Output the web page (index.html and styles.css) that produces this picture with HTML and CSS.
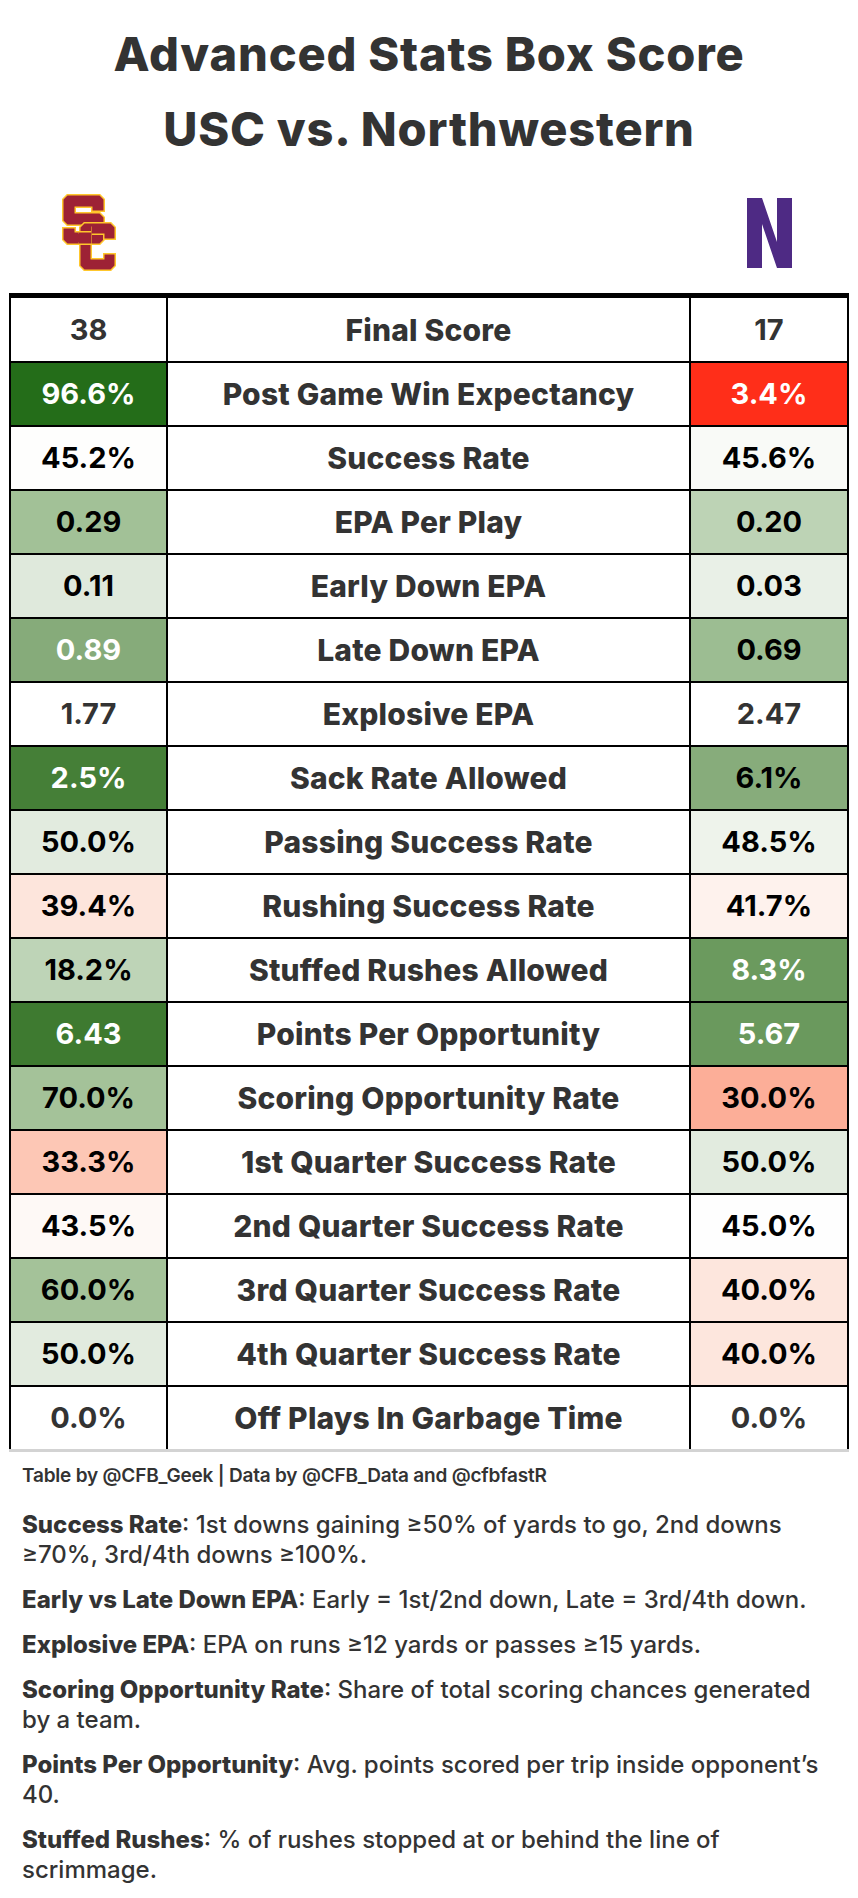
FILE: index.html
```html
<!DOCTYPE html>
<html lang="en">
<head>
<meta charset="utf-8">
<title>Advanced Stats Box Score</title>
<link rel="stylesheet" href="styles.css">
</head>
<body>
<header class="title">
  <h1>Advanced Stats Box Score<br>USC vs. Northwestern</h1>
</header>
<div class="logos">
  <div class="logo-cell">
    <svg class="logo-usc" viewBox="-1.5 -1.5 54 77" width="54" height="77" aria-label="USC">
      <defs>
        <path id="usc-s" d="M4,0 H36 L40,4 V15 H29 V11 H11 V18 H36 L40,22 V44 L36,48 H4 L0,44 V33 H11 V37 H29 V29 H4 L0,25 V4 Z"/>
        <clipPath id="usc-clip"><rect x="15" y="31" width="13" height="22"/></clipPath>
      </defs>
      <g fill="#9d2235" stroke="#ffc72c" stroke-width="3" paint-order="stroke">
        <use href="#usc-s"/>
        <path transform="translate(17,28)" d="M4,0 H30 L34,4 V15 H24 V10 H10 V36 H24 V31 H34 V42 L30,46 H4 L0,42 V4 Z"/>
        <use href="#usc-s" clip-path="url(#usc-clip)"/>
      </g>
    </svg>
  </div>
  <div></div>
  <div class="logo-cell">
    <svg class="logo-nu" viewBox="0 0 45 70" width="45" height="70" aria-label="Northwestern">
      <path fill="#4e2a84" d="M0,0 H15 L30,44 V0 H45 V70 H30 L15,26 V70 H0 Z"/>
    </svg>
  </div>
</div>

<div class="table">
  <div class="row first">
    <div class="cell">38</div><div class="cell label">Final Score</div><div class="cell">17</div>
  </div>
  <div class="row">
    <div class="cell light" style="background:#246d19">96.6%</div><div class="cell label">Post Game Win Expectancy</div><div class="cell light" style="background:#ff2e19">3.4%</div>
  </div>
  <div class="row">
    <div class="cell dark" style="background:#fefefd">45.2%</div><div class="cell label">Success Rate</div><div class="cell dark" style="background:#f9faf7">45.6%</div>
  </div>
  <div class="row">
    <div class="cell dark" style="background:#a2c197">0.29</div><div class="cell label">EPA Per Play</div><div class="cell dark" style="background:#bdd3b5">0.20</div>
  </div>
  <div class="row">
    <div class="cell dark" style="background:#dfe9dc">0.11</div><div class="cell label">Early Down EPA</div><div class="cell dark" style="background:#e9f0e7">0.03</div>
  </div>
  <div class="row">
    <div class="cell light" style="background:#86ab7a">0.89</div><div class="cell label">Late Down EPA</div><div class="cell dark" style="background:#9cbd92">0.69</div>
  </div>
  <div class="row">
    <div class="cell">1.77</div><div class="cell label">Explosive EPA</div><div class="cell">2.47</div>
  </div>
  <div class="row">
    <div class="cell light" style="background:#457f37">2.5%</div><div class="cell label">Sack Rate Allowed</div><div class="cell dark" style="background:#87ac7b">6.1%</div>
  </div>
  <div class="row">
    <div class="cell dark" style="background:#e2ebdf">50.0%</div><div class="cell label">Passing Success Rate</div><div class="cell dark" style="background:#eef3eb">48.5%</div>
  </div>
  <div class="row">
    <div class="cell dark" style="background:#fde5dc">39.4%</div><div class="cell label">Rushing Success Rate</div><div class="cell dark" style="background:#fef2ed">41.7%</div>
  </div>
  <div class="row">
    <div class="cell dark" style="background:#bed4b7">18.2%</div><div class="cell label">Stuffed Rushes Allowed</div><div class="cell light" style="background:#6b9a5e">8.3%</div>
  </div>
  <div class="row">
    <div class="cell light" style="background:#3e7a30">6.43</div><div class="cell label">Points Per Opportunity</div><div class="cell light" style="background:#6a995d">5.67</div>
  </div>
  <div class="row">
    <div class="cell dark" style="background:#a4c299">70.0%</div><div class="cell label">Scoring Opportunity Rate</div><div class="cell dark" style="background:#fcae98">30.0%</div>
  </div>
  <div class="row">
    <div class="cell dark" style="background:#fdc7b5">33.3%</div><div class="cell label">1st Quarter Success Rate</div><div class="cell dark" style="background:#e2ebdf">50.0%</div>
  </div>
  <div class="row">
    <div class="cell dark" style="background:#fef9f6">43.5%</div><div class="cell label">2nd Quarter Success Rate</div><div class="cell dark" style="background:#fefefe">45.0%</div>
  </div>
  <div class="row">
    <div class="cell dark" style="background:#a4c299">60.0%</div><div class="cell label">3rd Quarter Success Rate</div><div class="cell dark" style="background:#fde6dd">40.0%</div>
  </div>
  <div class="row">
    <div class="cell dark" style="background:#e2ebdf">50.0%</div><div class="cell label">4th Quarter Success Rate</div><div class="cell dark" style="background:#fde6dd">40.0%</div>
  </div>
  <div class="row">
    <div class="cell">0.0%</div><div class="cell label">Off Plays In Garbage Time</div><div class="cell">0.0%</div>
  </div>
</div>
<div class="table-end"></div>

<footer class="notes">
  <p class="credit">Table by @CFB_Geek | Data by @CFB_Data and @cfbfastR</p>
  <p><b>Success Rate</b>: 1st downs gaining ≥50% of yards to go, 2nd downs ≥70%, 3rd/4th downs ≥100%.</p>
  <p><b>Early vs Late Down EPA</b>: Early = 1st/2nd down, Late = 3rd/4th down.</p>
  <p><b>Explosive EPA</b>: EPA on runs ≥12 yards or passes ≥15 yards.</p>
  <p><b>Scoring Opportunity Rate</b>: Share of total scoring chances generated by a team.</p>
  <p><b>Points Per Opportunity</b>: Avg. points scored per trip inside opponent’s 40.</p>
  <p><b>Stuffed Rushes</b>: % of rushes stopped at or behind the line of scrimmage.</p>
</footer>
</body>
</html>
```

FILE: styles.css
```css
* { box-sizing: border-box; }

html, body {
  margin: 0;
  padding: 0;
  background: #ffffff;
}

body {
  width: 858px;
  font-family: Inter, "Liberation Sans", sans-serif;
  color: #333333;
}

.title {
  padding-top: 16px;
  text-align: center;
}

.title h1 {
  margin: 0;
  font-size: 47px;
  line-height: 75px;
  font-weight: 800;
  color: #333333;
  letter-spacing: 0.8px;
}

.logos {
  display: grid;
  grid-template-columns: 159px 1fr 160px;
  margin: 28px 9px 0;
  height: 75px;
  margin-bottom: 24px;
}

.logo-cell {
  display: flex;
  justify-content: center;
  align-items: flex-start;
}

.logo-usc { margin-top: 0; }
.logo-nu { margin-top: 4px; }

.table {
  margin: 0 9px;
  width: 840px;
  background: #000000;
  border-top: 5px solid #000000;
  padding: 0 2px;
  display: flex;
  flex-direction: column;
  gap: 2px;
}

.row {
  display: grid;
  grid-template-columns: 155px 521px 156px;
  column-gap: 2px;
  height: 62px;
}

.row.first { height: 63px; }

.cell {
  background: #ffffff;
  display: flex;
  align-items: center;
  justify-content: center;
  font-size: 29px;
  line-height: 36px;
  font-weight: 700;
  color: #333333;
}

.cell.label {
  font-size: 30px;
  font-weight: 800;
  letter-spacing: 0.2px;
}

.cell.dark { color: #000000; }
.cell.light { color: #ffffff; }

.table-end {
  margin: 0 9px;
  width: 840px;
  height: 3px;
  background: #d3d3d3;
}

.notes {
  padding: 9px 22px 0;
  width: 858px;
}

.notes p {
  margin: 0 0 15px;
  font-size: 24px;
  line-height: 30px;
  font-weight: 500;
  color: #333333;
}

.notes p.credit {
  font-weight: 600;
  font-size: 19px;
  letter-spacing: -0.2px;
  margin-bottom: 19px;
}

.notes b { font-weight: 800; }
```
